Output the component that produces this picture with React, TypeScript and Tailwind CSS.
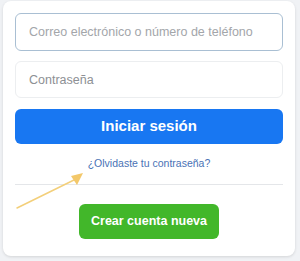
import React from 'react';

const Arrow = () => (
  <svg
    className="absolute left-0 top-0 pointer-events-none"
    width="300"
    height="261"
    viewBox="0 0 300 261"
  >
    <line x1="17" y1="208" x2="76" y2="179" stroke="#f3cf7a" strokeWidth="1.5" strokeLinecap="round" />
    <polygon points="83,173 71,176 77,185" fill="#f3c86a" />
  </svg>
);

export default function App() {
  return (
    <div
      className="relative w-[300px] h-[261px] bg-[#f0f2f5] pt-[1px] pl-[3px]"
      style={{ fontFamily: '"Liberation Sans", Arial, sans-serif' }}
    >
      <div className="w-[292px] h-[255px] bg-white rounded-lg shadow-[0_1px_3px_rgba(0,0,0,0.12)] px-3 pt-3 flex flex-col">
        <input
          type="text"
          placeholder="Correo electrónico o número de teléfono"
          className="h-[38px] w-full rounded-md border border-[#a9bfd3] px-[13px] text-[12.5px] text-gray-800 placeholder:text-[#a3a6aa] outline-none"
        />
        <input
          type="password"
          placeholder="Contraseña"
          className="mt-[10px] h-[37px] w-full rounded-md border border-[#eceef0] px-[13px] text-[12.5px] text-gray-800 placeholder:text-[#8d9094] outline-none"
        />
        <button className="mt-[11px] h-[35px] w-full rounded-md bg-[#1877f2] text-white font-bold text-[15px]">
          Iniciar sesión
        </button>
        <div className="mt-[13px] text-center text-[10.5px] leading-[12px]">
          <a className="text-[#4a72b5]">¿Olvidaste tu contraseña?</a>
        </div>
        <div className="mt-[15px] h-px bg-[#e4e6e9]" />
        <div className="mt-[19px] flex justify-center">
          <button className="h-[35px] w-[140px] rounded-md bg-[#42b72a] text-white font-bold text-[12.5px]">
            Crear cuenta nueva
          </button>
        </div>
      </div>
      <Arrow />
    </div>
  );
}
